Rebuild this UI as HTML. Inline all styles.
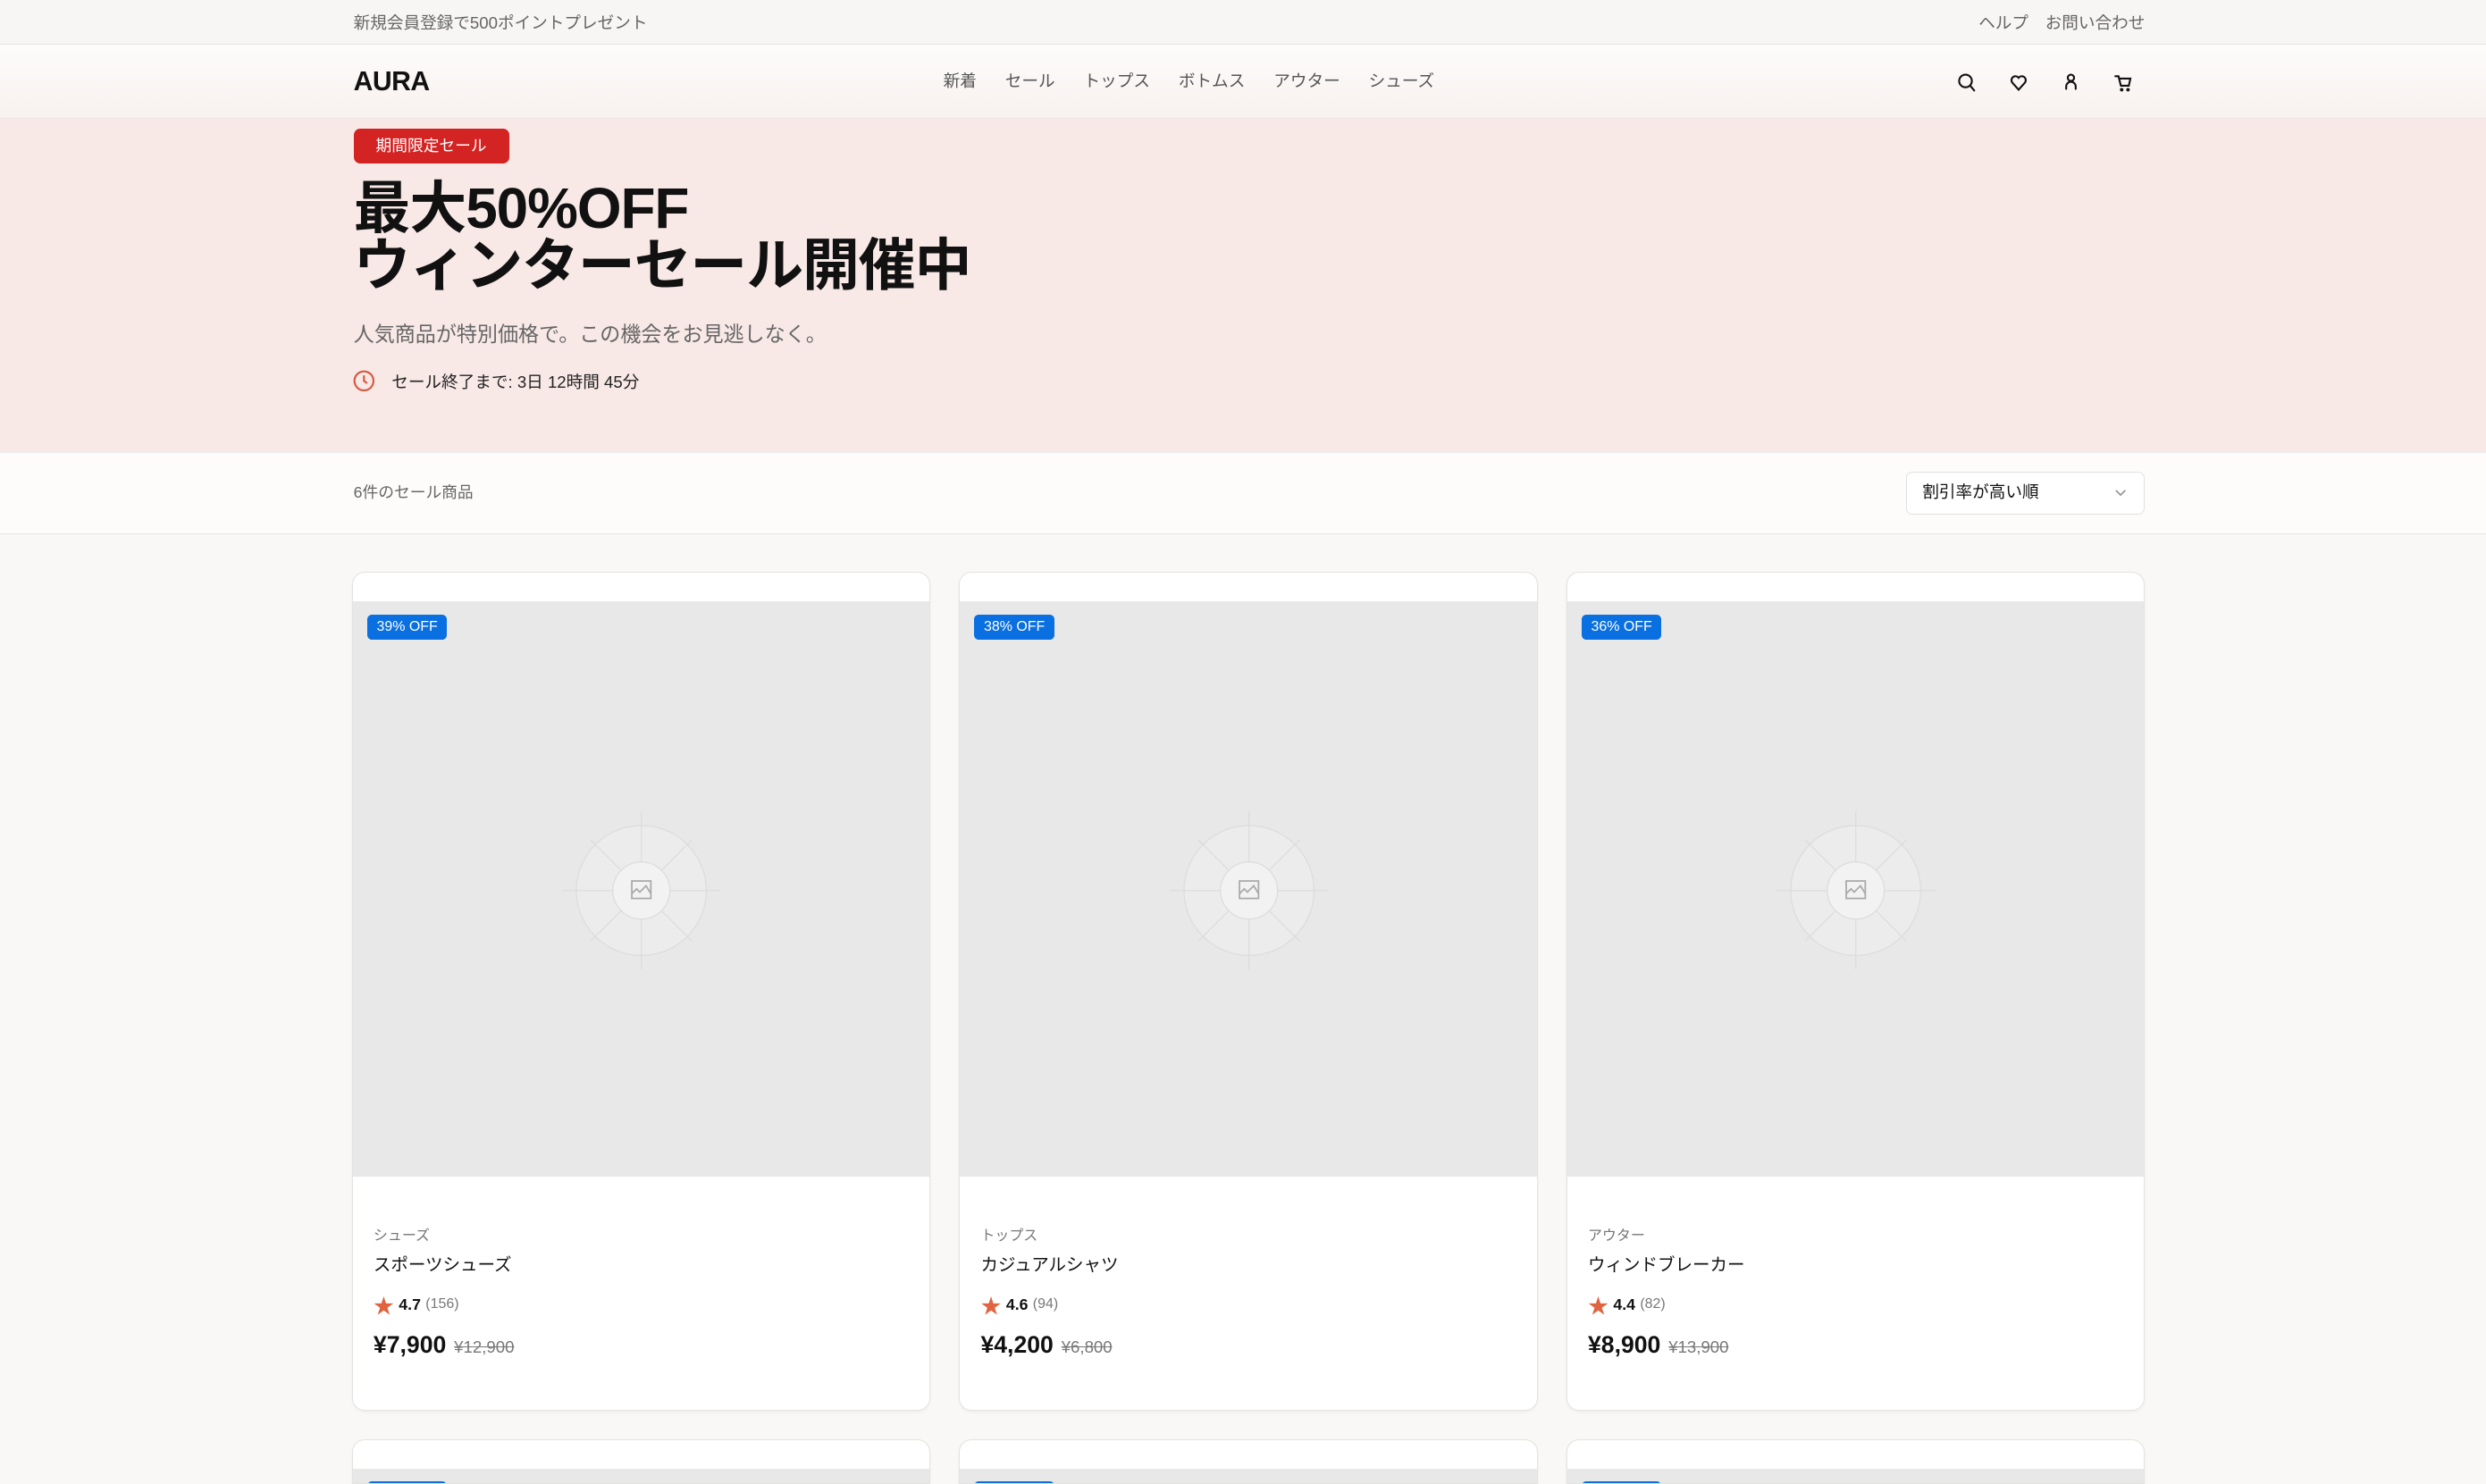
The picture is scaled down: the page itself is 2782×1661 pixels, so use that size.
<!DOCTYPE html>
<html><head><meta charset="utf-8"><style>
html{zoom:1.7742;overflow:hidden;height:936px}
*{box-sizing:border-box;margin:0;padding:0}
body{width:1568px;height:936px;overflow:hidden;background:#f9f8f6;font-family:"Liberation Sans","Noto Sans CJK JP",sans-serif;color:#111}
#w{position:relative;width:1568px;height:936px;overflow:hidden}
.abs{position:absolute}
.top{left:0;top:0;width:1568px;height:28px;background:#f7f6f4;border-bottom:1px solid #e6e4e1;font-size:10.5px;color:#666}
.hdr{left:0;top:28px;width:1568px;height:47px;background:linear-gradient(#fdfcfb,#f8f1ef);border-bottom:1px solid #ebe6e4}
.hero{left:0;top:75px;width:1568px;height:210px;background:#f8e9e7}
.bar{left:0;top:285px;width:1568px;height:52px;background:#fdfcfb;border-top:1px solid #eee;border-bottom:1px solid #e8e6e3}
.card{width:365px;height:529px;background:#fff;border:1px solid #e5e3e0;border-radius:8px;overflow:hidden;box-shadow:0 1px 2px rgba(0,0,0,.04)}
.img{position:absolute;left:0;top:18px;width:100%;height:363px;background:#e8e8e8}
.badge{position:absolute;left:9px;top:8px;background:#0a6fe0;color:#fff;font-size:9px;padding:2px 6px;border-radius:3px;line-height:12px}
.cat{position:absolute;left:13px;top:410px;font-size:9px;color:#777}
.nm{position:absolute;left:13px;top:427px;font-size:11px}
.rt{position:absolute;left:13px;top:452px;font-size:10px;display:flex;align-items:center;gap:3px}
.pr{position:absolute;left:13px;top:478px;font-size:15px;font-weight:bold}
.pr s{font-size:10.5px;color:#777;font-weight:normal;margin-left:5px}
</style></head><body><div id="w">
<div class="abs top"><span class="abs" style="left:223px;top:6px">新規会員登録で500ポイントプレゼント</span><span class="abs" style="left:1248px;top:6px">ヘルプ</span><span class="abs" style="left:1290px;top:6px">お問い合わせ</span></div>
<div class="abs hdr">
<div class="abs" style="left:223px;top:14px;font-size:17px;font-weight:bold;letter-spacing:-.3px">AURA</div>
<div class="abs" style="left:595px;top:15px;font-size:10.5px;color:#555">
<span style="margin-right:18px">新着</span><span style="margin-right:18px">セール</span><span style="margin-right:18px">トップス</span><span style="margin-right:18px">ボトムス</span><span style="margin-right:18px">アウター</span><span>シューズ</span></div>
<svg class="abs" style="left:1233px;top:17px" width="115" height="14" fill="none" stroke="#111" stroke-width="1.2" stroke-linecap="round">
<circle cx="6.5" cy="6" r="4"/><path d="M9.5 9l2.5 3"/>
<path d="M40 11.5l-4-4.5a2.4 2.4 0 0 1 4-3a2.4 2.4 0 0 1 4 3z"/>
<circle cx="73" cy="4" r="2"/><path d="M70 11v-1.5a3 3 0 0 1 6 0V11"/>
<path d="M101 3h2l1.5 6h5l1-4.5h-6.5"/><circle cx="105" cy="11.5" r=".5"/><circle cx="109" cy="11.5" r=".5"/>
</svg>
</div>
<div class="abs hero">
<div class="abs" style="left:223px;top:6px;width:98px;height:22px;background:#d42323;border-radius:4px;color:#fff;font-size:10px;line-height:22px;text-align:center">期間限定セール</div>
<div class="abs" style="left:223px;top:39px;font-size:36px;font-weight:bold;line-height:36px;letter-spacing:-.6px">最大50%OFF<br>ウィンターセール開催中</div>
<div class="abs" style="left:223px;top:125px;font-size:13px;color:#666">人気商品が特別価格で。この機会をお見逃しなく。</div>
<svg class="abs" style="left:222px;top:158px" width="15" height="15" fill="none" stroke="#d9553d" stroke-width="1.2"><circle cx="7.5" cy="7.5" r="6"/><path d="M7.5 4v3.5l2 1.5"/></svg>
<div class="abs" style="left:247px;top:158px;font-size:10.5px;color:#222">セール終了まで: 3日 12時間 45分</div>
</div>
<div class="abs bar">
<div class="abs" style="left:223px;top:17px;font-size:10px;color:#666">6件のセール商品</div>
<div class="abs" style="left:1202px;top:12px;width:151px;height:27px;background:#fff;border:1px solid #e3e1de;border-radius:4px;font-size:10.5px;line-height:25px;padding-left:10px">割引率が高い順<svg class="abs" style="left:131px;top:10px" width="8" height="6" fill="none" stroke="#999"><path d="M1 1l3 3 3-3"/></svg></div>
</div>

<div class="abs card" style="left:222px;top:361px"><div class="img"><span class="badge">39% OFF</span>
<svg class="abs" style="left:132px;top:132px" width="100" height="100" fill="none" stroke="#dcdcdc" stroke-width=".7"><circle cx="50" cy="50" r="41" fill="#ececec"/><path d="M50 0v100M0 50h100M18 18l64 64M82 18l-64 64"/><circle cx="50" cy="50" r="18" fill="#f2f2f2"/><rect x="44" y="44" width="12" height="11" stroke="#aaa" stroke-width="1"/><path d="M44 52l3-3 2 2 4-4 3 5" stroke="#aaa" stroke-width="1"/></svg></div>
<div class="cat">シューズ</div><div class="nm">スポーツシューズ</div><div class="rt"><span style="color:#e0643f;font-size:13px">★</span><b style="font-weight:600">4.7</b><span style="color:#777;font-size:9px">(156)</span></div><div class="pr">¥7,900<s>¥12,900</s></div></div>

<div class="abs card" style="left:605px;top:361px"><div class="img"><span class="badge">38% OFF</span>
<svg class="abs" style="left:132px;top:132px" width="100" height="100" fill="none" stroke="#dcdcdc" stroke-width=".7"><circle cx="50" cy="50" r="41" fill="#ececec"/><path d="M50 0v100M0 50h100M18 18l64 64M82 18l-64 64"/><circle cx="50" cy="50" r="18" fill="#f2f2f2"/><rect x="44" y="44" width="12" height="11" stroke="#aaa" stroke-width="1"/><path d="M44 52l3-3 2 2 4-4 3 5" stroke="#aaa" stroke-width="1"/></svg></div>
<div class="cat">トップス</div><div class="nm">カジュアルシャツ</div><div class="rt"><span style="color:#e0643f;font-size:13px">★</span><b style="font-weight:600">4.6</b><span style="color:#777;font-size:9px">(94)</span></div><div class="pr">¥4,200<s>¥6,800</s></div></div>

<div class="abs card" style="left:988px;top:361px"><div class="img"><span class="badge">36% OFF</span>
<svg class="abs" style="left:132px;top:132px" width="100" height="100" fill="none" stroke="#dcdcdc" stroke-width=".7"><circle cx="50" cy="50" r="41" fill="#ececec"/><path d="M50 0v100M0 50h100M18 18l64 64M82 18l-64 64"/><circle cx="50" cy="50" r="18" fill="#f2f2f2"/><rect x="44" y="44" width="12" height="11" stroke="#aaa" stroke-width="1"/><path d="M44 52l3-3 2 2 4-4 3 5" stroke="#aaa" stroke-width="1"/></svg></div>
<div class="cat">アウター</div><div class="nm">ウィンドブレーカー</div><div class="rt"><span style="color:#e0643f;font-size:13px">★</span><b style="font-weight:600">4.4</b><span style="color:#777;font-size:9px">(82)</span></div><div class="pr">¥8,900<s>¥13,900</s></div></div>

<div class="abs card" style="left:222px;top:908px;height:28px;border-radius:8px 8px 0 0"><div class="img"><span class="badge">35% OFF</span></div></div>
<div class="abs card" style="left:605px;top:908px;height:28px;border-radius:8px 8px 0 0"><div class="img"><span class="badge">33% OFF</span></div></div>
<div class="abs card" style="left:988px;top:908px;height:28px;border-radius:8px 8px 0 0"><div class="img"><span class="badge">30% OFF</span></div></div>
</div></body></html>
